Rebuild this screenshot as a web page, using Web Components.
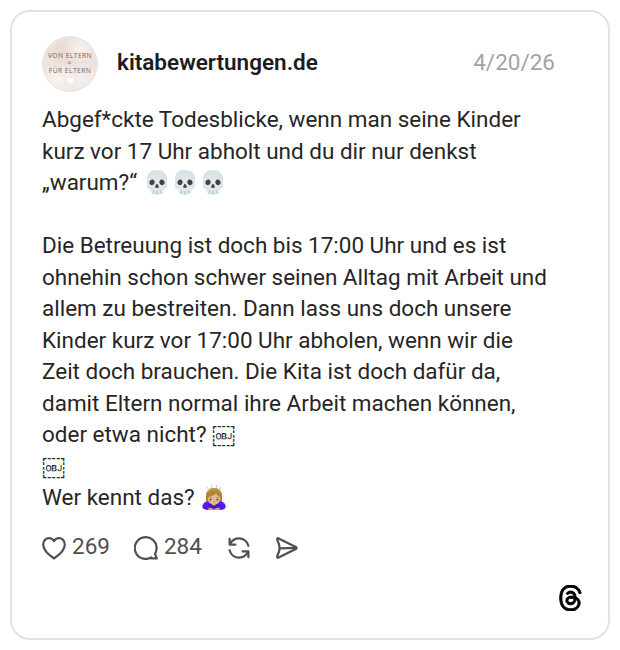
<!DOCTYPE html>
<html lang="de"><head><meta charset="utf-8"><style>
html,body{margin:0;padding:0;background:#fff}
body{width:620px;height:650px;overflow:hidden;font-family:Roboto,sans-serif}
</style></head><body>
<post-card>
<post-header slot="header" name="kitabewertungen.de" date="4/20/26"></post-header>
<p>Abgef*ckte Todesblicke, wenn man seine Kinder<br>kurz vor 17 Uhr abholt und du dir nur denkst<br>„warum?“ 💀💀💀<br><br>Die Betreuung ist doch bis 17:00 Uhr und es ist<br>ohnehin schon schwer seinen Alltag mit Arbeit und<br>allem zu bestreiten. Dann lass uns doch unsere<br>Kinder kurz vor 17:00 Uhr abholen, wenn wir die<br>Zeit doch brauchen. Die Kita ist doch dafür da,<br>damit Eltern normal ihre Arbeit machen können,<br>oder etwa nicht? &#xFFFC;<br>&#xFFFC;<br>Wer kennt das? 🙇🏼‍♀️</p>
<post-actions slot="actions"></post-actions>
</post-card>
<script>
class PostCard extends HTMLElement{
  constructor(){
    super();
    this.attachShadow({mode:'open'}).innerHTML=`<style>
:host{display:flex;flex-direction:column;box-sizing:border-box;width:600px;height:630px;margin:10px;border:2px solid #e3e3e3;border-radius:20px;padding:24px 54px 0 30px;color:#262626;font:22.5px/31.5px Roboto,sans-serif}
::slotted(p){margin:12px 0 0;font-size:22.47px;line-height:31.5px;white-space:nowrap}
.foot{display:flex;justify-content:flex-end;margin:21px -29px 0 0}
</style><slot name="header"></slot><slot></slot><slot name="actions"></slot>
<div class="foot"><svg width="25" height="26" viewBox="0 0 192 192" fill="#000" stroke="#000" stroke-width="7" preserveAspectRatio="none"><path d="M141.5 88.99c-.83-.4-1.67-.78-2.52-1.14-1.48-27.3-16.4-42.94-41.44-43.1h-.34c-14.98 0-27.44 6.39-35.1 18.03l13.77 9.45c5.73-8.69 14.72-10.54 21.34-10.54h.23c8.25.05 14.47 2.45 18.5 7.13 2.93 3.41 4.89 8.11 5.86 14.05-7.31-1.24-15.21-1.62-23.66-1.14-23.8 1.37-39.1 15.25-38.07 34.53.52 9.78 5.39 18.2 13.72 23.69 7.04 4.65 16.11 6.92 25.54 6.41 12.45-.68 22.22-5.43 29.03-14.12 5.17-6.6 8.44-15.16 9.89-25.94 5.93 3.58 10.33 8.29 12.76 13.95 4.13 9.62 4.37 25.43-8.53 38.32-11.3 11.29-24.89 16.17-45.42 16.32-22.78-.17-40-7.47-51.2-21.71-10.49-13.33-15.91-32.59-16.11-57.24.2-24.65 5.62-43.91 16.11-57.24 11.2-14.24 28.42-21.54 51.2-21.71 22.94.17 40.47 7.51 52.1 21.8 5.71 7.01 10.01 15.82 12.84 26.1l16.14-4.3c-3.44-12.68-8.85-23.6-16.22-32.67C147.04 9.6 125.2.2 97.07 0h-.11C68.9.2 47.29 9.64 32.75 28.06 19.8 44.46 13.13 67.27 12.91 95.93v.14c.22 28.66 6.89 51.47 19.84 67.87C47.29 182.36 68.9 191.8 96.96 192h.11c24.94-.17 42.52-6.7 57-21.17 18.94-18.92 18.37-42.64 12.13-57.2-4.48-10.44-13.02-18.92-24.7-24.64Zm-43.06 40.49c-10.43.59-21.27-4.1-21.8-14.13-.4-7.44 5.3-15.74 22.46-16.73 1.97-.11 3.9-.17 5.79-.17 6.24 0 12.07.61 17.37 1.77-1.98 24.7-13.58 28.7-23.82 29.26Z"/></svg></div>`;
  }
}
customElements.define('post-card',PostCard);

class PostHeader extends HTMLElement{
  constructor(){
    super();
    const name=this.getAttribute('name')||'',date=this.getAttribute('date')||'';
    this.attachShadow({mode:'open'}).innerHTML=`<style>
:host{display:flex;align-items:center;height:56px}
.av{position:relative;width:56px;height:56px;box-sizing:border-box;border:1px solid #e8e6e4;border-radius:50%;margin-right:19px;display:flex;flex-direction:column;align-items:center;justify-content:center;flex:none;color:#6a625c;font:500 6.6px/7.6px "Open Sans",sans-serif;letter-spacing:.5px;padding-bottom:2px;background:radial-gradient(circle at 68% 22%,#f6f3f1 0,transparent 26%),radial-gradient(circle at 40% 30%,#ead9d0 0,transparent 38%),radial-gradient(circle at 72% 78%,#f5f1ee 0,transparent 30%),radial-gradient(circle at 28% 78%,#f8f5f2 0,transparent 34%),#eee3dd}
.av svg{position:absolute;left:24px;bottom:7px}
.name{font:600 22.5px/30px Roboto,sans-serif;color:#1c1c1c;margin-bottom:4px}
.date{margin-left:auto;margin-right:-1px;margin-bottom:4px;color:#a3a3a3;font:400 22.5px/30px Roboto,sans-serif}
</style><div class="av"><span>VON ELTERN</span><span>≈</span><span>FÜR ELTERN</span><svg width="7" height="6" viewBox="0 0 24 24" preserveAspectRatio="none"><path fill="#fff" d="M12 23C8 19 0 14 0 7c0-8 9-9 12-3 3-6 12-5 12 3 0 7-8 12-12 16Z"/></svg></div><span class="name">${name}</span><span class="date">${date}</span>`;
  }
}
customElements.define('post-header',PostHeader);

class PostActions extends HTMLElement{
  constructor(){
    super();
    this.attachShadow({mode:'open'}).innerHTML=`<style>
:host{display:flex;align-items:center;height:32px;margin-top:18px;color:#505050;font:400 22.5px/30px Roboto,sans-serif}
svg{flex:none;fill:none;stroke:#505050;stroke-width:2.2;stroke-linejoin:round;stroke-linecap:round}
span{margin-left:6px;position:relative;top:-2px}
.c{margin-left:24px}
.r{margin-left:25px}
.s{margin-left:24px}
</style>
<svg width="24" height="24" viewBox="0 0 24 24"><path d="M12 22.4C8.6 20 1.2 15.2 1.2 8.4 1.2 4.6 4 2.2 7 2.2c2.2 0 3.9 1 5 3 1.1-2 2.8-3 5-3 3 0 5.8 2.4 5.8 6.2 0 6.8-7.4 11.6-10.8 14Z"/></svg><span>269</span>
<svg class="c" width="24" height="24" viewBox="0 0 24 24"><path d="M22.8 22.6h-5.2l-.5-.9A10.9 10.9 0 1 1 22.6 12c0 2.6-.6 4.5-1.6 6Z" transform="translate(0 -.2)"/></svg><span>284</span>
<svg class="r" width="24" height="24" viewBox="0 0 24 24"><path d="M21.4 9.8C20.2 5.4 16.4 2.4 12 2.4c-3.8 0-7 2-8.8 5.4"/><path d="M2.6 2.8v5.8h5.8"/><path d="M2.6 14.2c1.2 4.4 5 7.4 9.4 7.4 3.8 0 7-2 8.8-5.4"/><path d="M21.4 21.2v-5.8h-5.8"/></svg>
<svg class="s" width="24" height="24" viewBox="0 0 24 24"><path d="M3.6 2.4C2.6 1.9 1.7 2.8 2.2 3.8 3.6 6.6 4.6 9 4.6 12S3.6 17.4 2.2 20.2c-.5 1 .4 1.9 1.4 1.4L20.8 13c1-.5 1-1.5 0-2Z"/><path d="M4.8 12.4l16.4-.6"/></svg>`;
  }
}
customElements.define('post-actions',PostActions);
</script>
</body></html>
